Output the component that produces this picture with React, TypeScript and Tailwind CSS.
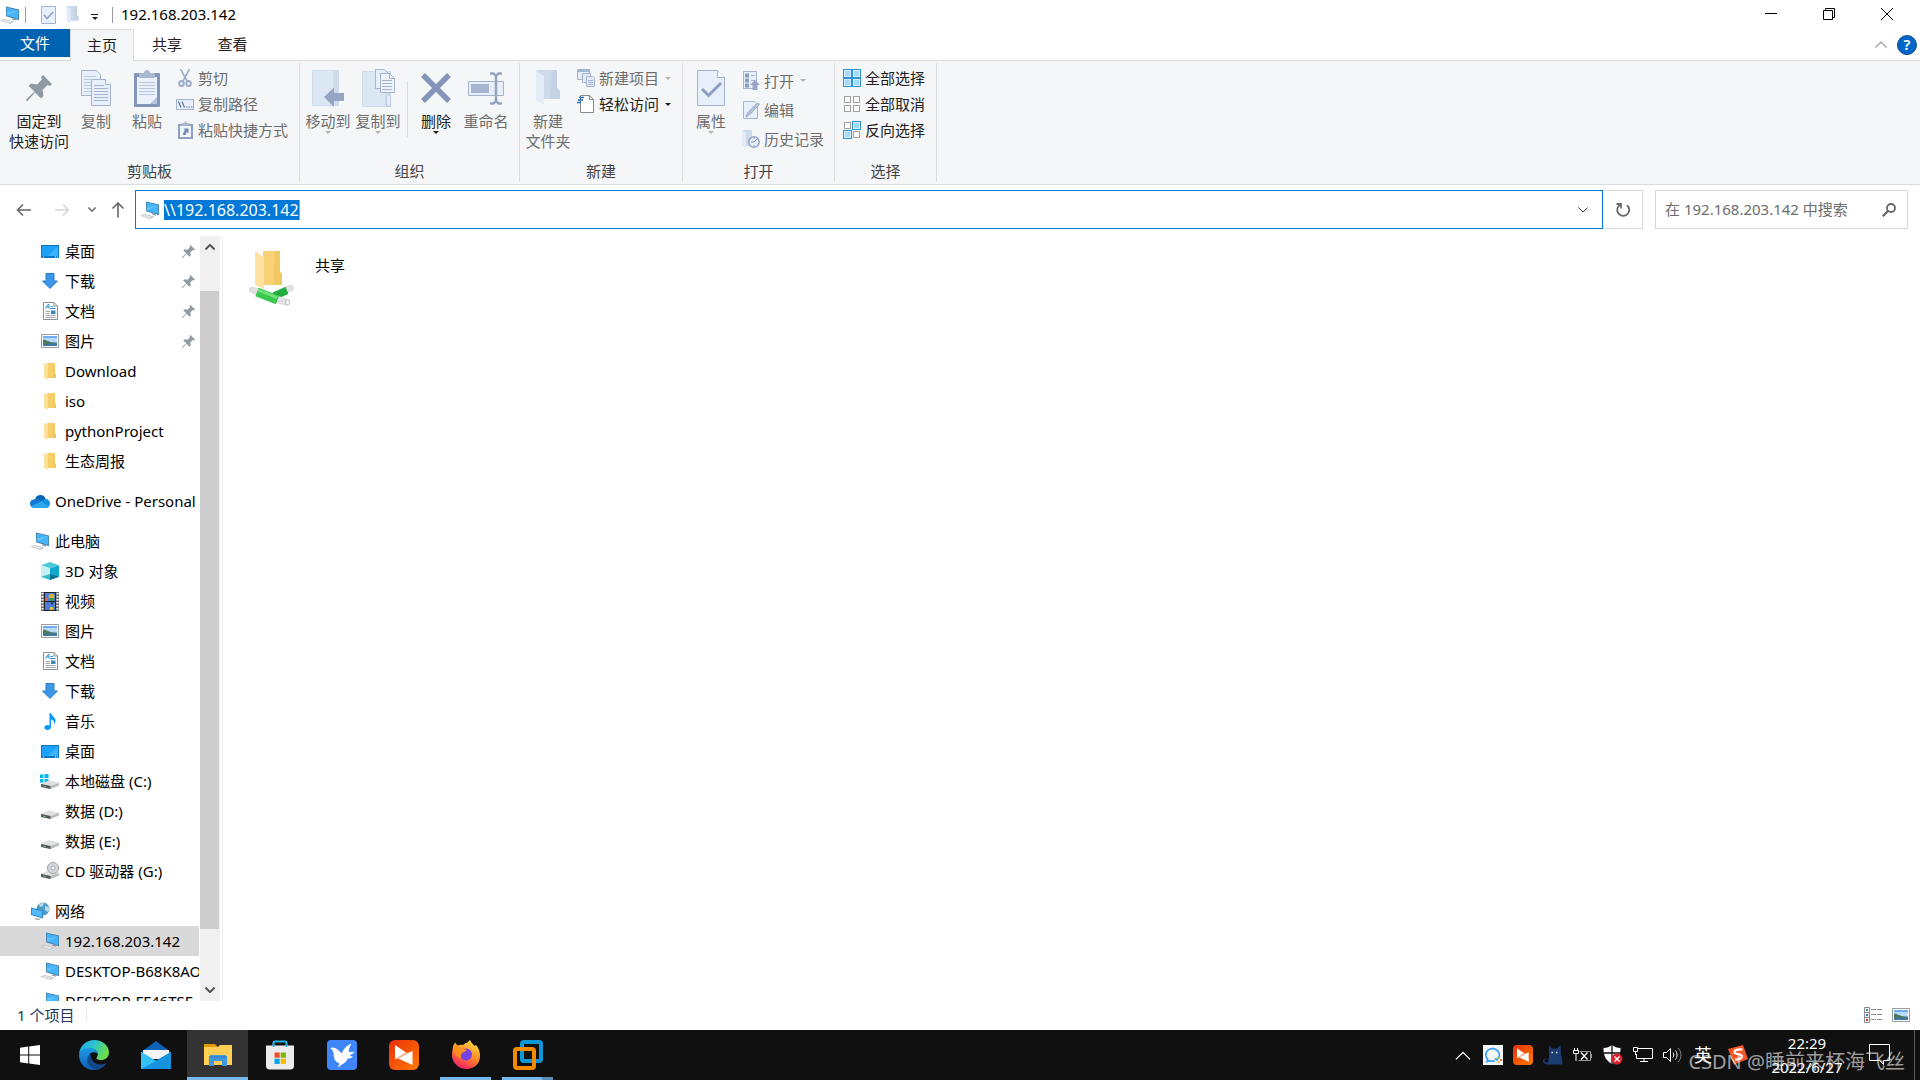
import type { ReactNode } from "react";
import clsx from "clsx";

type IconProps = { className?: string };

/* ---------- shared icons ---------- */

function PcIcon({ className = "w-5 h-[18px]" }: IconProps) {
  return (
    <svg viewBox="0 -1 20 18" className={className}>
      <path d="M6 -.5 19 2.600v10.600L6 9.300z" fill="#4a7fa8" />
      <path d="M6.8 .6 18.2 3.300v8.700L6.8 8.500z" fill="#45b5fb" />
      <path d="M18.2 3.300 6.8 8.500v-3z" fill="#7accfd" opacity=".6" />
      <path d="M12 11.200l4 1.200v1.400l-4-1.200z" fill="#8d98a0" />
      <path d="M0 13.800 4.500 12l10 2.600-4.200 2.400z" fill="#bfc5ca" />
      <path d="M2.200 13.800 5 12.800l7 1.900-2.400 1.300z" fill="#e6e9eb" />
    </svg>
  );
}

function FolderIcon({ className = "w-3 h-[17px]" }: IconProps) {
  return (
    <svg viewBox="0 0 12 17" className={className}>
      <path d="M3 0h8v10.5l1 .8V15H3z" fill="#f7cf6a" />
      <path d="M9.500 0H11v10.500l1 .8V15H9z" fill="#f3c65a" />
      <path d="M0 0l4 1.800V16.800L0 15z" fill="#fee29b" />
    </svg>
  );
}

function PaleFolder({ className }: IconProps) {
  return (
    <svg viewBox="0 0 24 36" className={className}>
      <path d="M0 0h21v18l3 3v8H6z" fill="#cddaea" />
      <path d="M16 0h5v18l3 3v8H14z" fill="#c3d2e5" />
      <path d="M0 1l8 5v29l-8-5z" fill="#e3ecf7" />
    </svg>
  );
}

function PinIcon({ className = "w-[13px] h-[13px]" }: IconProps) {
  return (
    <svg viewBox="0 0 26 26" className={className} fill="#8f9ba3">
      <path d="M17 0l9 9-2 2-2.500-1-5 5 1 6-2.500 2.500-6-6L1.500 26 0 25.500.500 24 8.500 16.500l-6-5.500L5 8.500l6 1 5-5L15 2z" />
    </svg>
  );
}

function DesktopIcon() {
  return (
    <svg viewBox="0 0 18 13" className="w-[18px] h-[13px]">
      <path d="M0 0h18v13H0z" fill="#0b77c5" />
      <path d="M1 1h16v10H1z" fill="#1ba1fb" />
      <path d="M17 1v10H7z" fill="#3db2ff" />
      <path d="M2 12h1M14 12h1M16 12h1" stroke="#fff" />
    </svg>
  );
}

function DownloadIcon() {
  return (
    <svg viewBox="0 0 16 16" className="w-4 h-4">
      <path d="M4 .5h8V8h3.500L8 15.500.500 8H4z" fill="#3d97e8" stroke="#2a7cc8" />
    </svg>
  );
}

function DocumentIcon() {
  return (
    <svg viewBox="0 0 15 18" className="w-[15px] h-[18px]">
      <path d="M.5.5h10.500l3.500 3.500v13.500H.500z" fill="#fff" stroke="#8a8f94" />
      <path d="M11 .5V4h3.500" fill="none" stroke="#8a8f94" />
      <path d="M2.500 6.500 5 2.500h1v4M3.500 5H6M7.500 4.500H10M7 6.500h5.500" stroke="#2f8fd0" fill="none" />
      <path d="M2.500 9.500H7M2.500 11.500H7M2.500 13.500h10M2.500 15.500h10" stroke="#a0a6ab" />
      <path d="M8 8.500h4.500V12H8z" fill="#3a86b8" />
    </svg>
  );
}

function PictureIcon() {
  return (
    <svg viewBox="0 0 18 14" className="w-[18px] h-[14px]">
      <path d="M.5.5h17v13H.500z" fill="#fff" stroke="#9a9da0" />
      <path d="M2 2h14v10H2z" fill="#6facf3" />
      <path d="M2 4h14v4H2z" fill="#b9dafa" />
      <path d="M2 5.500c3 0 5 2 9 3l5 .8v1H2z" fill="#4d7a5b" />
      <path d="M2 9.800h14V12H2z" fill="#3f78a3" />
    </svg>
  );
}

function OneDriveIcon() {
  return (
    <svg viewBox="0 0 20 13" className="w-5 h-[13px]">
      <path d="M5 4.500A5.500 5.500 0 0 1 15.500 3.500L13 9 3 8z" fill="#0364b8" />
      <path d="M4.500 4.300C1.500 4.500 0 6.300 0 8.600 0 11.200 2 13 4.500 13L14 7 8.500 4.600C7 4 6 4 4.500 4.300z" fill="#0f78d4" />
      <path d="M10.500 6.500 15.500 3.800C18.500 4 20 6.500 20 8.500c0 2.600-1.800 4.500-4 4.500H9z" fill="#1490df" />
      <path d="M4.500 13c-1.500 0-2.800-.8-3.500-1.800L11 6.500l8 4.600C18.300 12.300 17 13 16 13z" fill="#28a8ea" />
    </svg>
  );
}

function CubeIcon() {
  return (
    <svg viewBox="0 0 18 18" className="w-[18px] h-[18px]">
      <path d="M0 3.200 9 0l9 3.200-9 3z" fill="#4cc9d8" />
      <path d="M0 3.200l9 3V18l-9-3.200z" fill="#c3f0f2" />
      <path d="M18 3.200l-9 3V18l9-3.200z" fill="#0fa9cf" />
      <path d="M9 12v6l-9-3.200z" fill="#35bccb" />
      <path d="M9 12v6l9-3.200z" fill="#04718f" />
    </svg>
  );
}

function VideoIcon() {
  return (
    <svg viewBox="0 0 18 19" className="w-[18px] h-[19px]">
      <path d="M0 0h18v19H0z" fill="#6a6a6a" />
      <path d="M1.500 1v17M16.500 1v17" stroke="#fff" strokeWidth="2" strokeDasharray="1.500 1.500" />
      <path d="M3 0h12v19H3z" fill="#222" />
      <path d="M4 1h10v8H4zM4 10h10v8H4z" fill="#4a7fe0" />
      <circle cx="10.500" cy="4.500" r="2.800" fill="#e0b32c" />
      <path d="M9 6h3.500v2.500H9z" fill="#3f9a3d" />
      <path d="M4 5.500h3V9H4z" fill="#d8645a" />
      <path d="M9.500 10.500h3l-1.500 3z" fill="#2b2b2b" />
      <circle cx="10.500" cy="16.500" r="1.800" fill="#e8c12e" />
    </svg>
  );
}

function MusicIcon() {
  return (
    <svg viewBox="0 0 12 17" className="w-3 h-[17px]">
      <path d="M5.500 0h1.500c.5 3 4.500 4 4.500 7.500 0 1.500-.5 2.500-1.500 3.500.5-3-1-4-3-4.500V14c0 2-1.700 3-3.500 3S.300 16 .300 14.500 2 12 3.500 12c.8 0 1.500.2 2 .5z" fill="#0a99f2" />
    </svg>
  );
}

function DriveIcon({ kind }: { kind?: "windows" | "cd" }) {
  return (
    <svg viewBox="0 0 20 18" className="w-5 h-[18px]">
      {kind === "windows" && (
        <path d="M0 2.500h3.500V6H0zM4.500 2h4v4h-4zM0 7h3.500v3.500H0zM4.500 7h4v4h-4z" fill="#00b7f1" />
      )}
      <path d="M1 12 9 8.500 19 11v2.500l-8.500 3.500L1 14.500z" fill="#b9bcbe" />
      <path d="M1 12 9 8.500 19 11l-8.500 3z" fill="#e0e1e2" />
      <path d="M1 12l9.500 2v3L1 15z" fill="#55585a" />
      <path d="M3 14.200l3 .6" stroke="#52c24f" />
      {kind === "cd" && (
        <>
          <circle cx="13" cy="6" r="5.500" fill="#d6dadd" stroke="#9aa0a5" />
          <circle cx="13" cy="6" r="2" fill="#fff" stroke="#9aa0a5" />
        </>
      )}
    </svg>
  );
}

function NetworkIcon() {
  return (
    <svg viewBox="0 0 19 18" className="w-[19px] h-[18px]">
      <circle cx="12" cy="7" r="6.500" fill="#4e9cc9" />
      <path d="M8 2.500c2-1.500 4-1.800 5-1.500l-1 3-3 1zM14 4l4 1c.5 2 0 4-1 5l-3-2z" fill="#b6dbe9" />
      <path d="M0 5.500 12 8.500v8L0 13z" fill="#2c83bb" />
      <path d="M.800 6.600 11.200 9.300v6L.800 12.300z" fill="#50bbfc" />
      <path d="M4 16.500l5 1.300" stroke="#a5adb2" strokeWidth="1.500" />
    </svg>
  );
}

/* ---------- ribbon icons ---------- */

function CheckPage({ className }: IconProps) {
  return (
    <svg viewBox="0 0 28 36" className={className}>
      <path d="M.500.500h20l7 7v28H.500z" fill="#e6effa" stroke="#a4b4d0" />
      <path d="M20.500.500v7h7" fill="#fff" stroke="#a4b4d0" />
      <path d="M5 19l6.500 6.500L24 13" fill="none" stroke="#8d9fc1" strokeWidth="3" />
    </svg>
  );
}

function SmallCheckPage() {
  return (
    <svg viewBox="0 0 15 18" className="w-[15px] h-[18px]">
      <path d="M.500.500h14v17H.500z" fill="#e6effa" stroke="#a4b4d0" />
      <path d="M3 9l3 3.500L12 6" fill="none" stroke="#8d9fc1" strokeWidth="1.500" />
    </svg>
  );
}

function CopyIcon() {
  return (
    <svg viewBox="0 0 30 36" className="w-[30px] h-9">
      <path d="M.500.500h15l4 4v21H.500z" fill="#e6effa" stroke="#a4b4d0" />
      <path d="M3 6.500h12M3 9.500h13M3 12.500h8M3 15.500h7M3 18.500h7M3 21.500h7" stroke="#bccae0" />
      <path d="M10.500 9.500h14l5 5v21h-19z" fill="#e6effa" stroke="#a4b4d0" />
      <path d="M24.500 9.500v5h5" fill="#fff" stroke="#a4b4d0" />
      <path d="M13 15.500h10M13 18.500h14M13 21.500h14M13 24.500h14M13 27.500h14M13 30.500h14" stroke="#a4b4d0" />
    </svg>
  );
}

function PasteIcon() {
  return (
    <svg viewBox="0 0 26 37" className="w-[26px] h-[37px]">
      <rect y="3" width="26" height="34" rx="1" fill="#8396ba" />
      <path d="M3 7h20v27H3z" fill="#eaf1fb" />
      <path d="M5 3h5c0-4 6-4 6 0h5v5H5z" fill="#a9b7cf" />
      <path d="M5 12.500h16M5 15.500h16M5 18.500h16M5 21.500h16M5 24.500h16" stroke="#b9c7de" />
      <path d="M23 27v7h-7z" fill="#b4c1d8" />
    </svg>
  );
}

function CutIcon() {
  return (
    <svg viewBox="0 0 14 18" className="w-[14px] h-[18px]" fill="none" stroke="#9badc8">
      <path d="M2.500 0 9 12M11.500 0 5 12" strokeWidth="1.600" />
      <ellipse cx="3.500" cy="14.500" rx="2.300" ry="2.600" strokeWidth="2" />
      <ellipse cx="10.500" cy="14.500" rx="2.300" ry="2.600" strokeWidth="2" />
    </svg>
  );
}

function CopyPathIcon() {
  return (
    <svg viewBox="0 0 18 11" className="w-[18px] h-[11px]">
      <path d="M.500.500h17v10H.500z" fill="#e6effa" stroke="#a4b4d0" />
      <path d="M2.500 2.500l2.500 6M6 2.500l2.500 6M10 8h1.500M12.500 8H14M15 8h1.500" stroke="#5f7499" strokeWidth="1.200" />
    </svg>
  );
}

function PasteShortcutIcon() {
  return (
    <svg viewBox="0 0 15 18" className="w-[15px] h-[18px]">
      <path d="M0 3h15v15H0z" fill="#8fa0c0" />
      <path d="M2 5h11v11H2z" fill="#f1f6fd" />
      <path d="M4 2h2.500c0-2.500 2-2.500 2 0H11v3H4z" fill="#a9b7cf" />
      <path d="M5.500 7.500h5v5l-1.700-1.700-1.300 3.200H5c0-2 .5-3.500 2-4.800z" fill="#7389af" />
    </svg>
  );
}

function MoveToIcon() {
  return (
    <svg viewBox="0 0 32 37" className="w-8 h-[37px]">
      <path d="M0 0h27v36H0z" fill="#cfdcec" />
      <path d="M1 1h20v34H1z" fill="#dce7f4" />
      <path d="M12 27 22 17.500V23h10v8H22v6z" fill="#95a5c2" />
    </svg>
  );
}

function CopyToIcon() {
  return (
    <svg viewBox="0 0 33 38" className="w-[33px] h-[38px]">
      <path d="M0 2h29v36H0z" fill="#cfdcec" />
      <path d="M1 3h22v34H1z" fill="#dce7f4" />
      <path d="M24.500 37V28c0-3 4-3 4 0v9z" fill="#e6effa" stroke="#bccae0" />
      <path d="M13.500.500h9l4 4v15h-13z" fill="#e6effa" stroke="#a4b4d0" />
      <path d="M18.500 4.500h9l5 5v14h-14z" fill="#eef4fc" stroke="#a4b4d0" />
      <path d="M27.500 4.500v5h5M20 11.500h10M20 14.500h10M20 17.500h10M20 20.500h10" fill="none" stroke="#a4b4d0" />
    </svg>
  );
}

function DeleteIcon() {
  return (
    <svg viewBox="0 0 32 32" className="w-8 h-8">
      <path d="M3 3l26 26M29 3 3 29" stroke="#8395b8" strokeWidth="5.500" />
    </svg>
  );
}

function RenameIcon() {
  return (
    <svg viewBox="0 0 36 33" className="w-9 h-[33px]">
      <path d="M.500 9.500h35v14H.500z" fill="#e6effa" stroke="#a4b4d0" />
      <path d="M3 12h18v9H3z" fill="#a6b5d1" />
      <path d="M22 1.500h3.500L28 4l2.500-2.500H34M22 31.500h3.500L28 29l2.500 2.500H34M28 4v25" fill="none" stroke="#94a4c2" strokeWidth="2.500" />
    </svg>
  );
}

function NewItemIcon() {
  return (
    <svg viewBox="0 0 18 18" className="w-[18px] h-[18px]" fill="#e3ecf7" stroke="#a4b4d0">
      <path d="M.500.500h12v10H.500z" />
      <path d="M1 2h11" strokeWidth="2" />
      <path d="M5.500 4.500h8v9h-8z" />
      <path d="M9.500 7.500h6l2 2v8h-8z" />
      <path d="M11 11.500h5M11 13.500h5M11 15.500h5" />
    </svg>
  );
}

function EasyAccessIcon() {
  return (
    <svg viewBox="0 0 18 18" className="w-[18px] h-[18px]">
      <path d="M3.500.500h9l4 4v13h-13z" fill="#fff" stroke="#8a8a8a" />
      <path d="M12.500.500v4h4" fill="none" stroke="#8a8a8a" />
      <path d="M2 2.500h5M1 5h5M0 7.500h4" stroke="#1e6fb8" strokeWidth="1.400" />
    </svg>
  );
}

function OpenIcon() {
  return (
    <svg viewBox="0 0 17 19" className="w-[17px] h-[19px]">
      <path d="M.500.500h13v17H.500z" fill="#e6effa" stroke="#a4b4d0" />
      <path d="M2 2.500h4v4H2zM2 7.500h4v4H2zM2 12.500h4v4H2z" fill="#8d9fc1" />
      <path d="M8 4.500h4M8 9.500h4" stroke="#a4b4d0" />
      <path d="M12 9l5 5h-2.500v5h-5v-5H7z" fill="#95a5c2" />
    </svg>
  );
}

function EditIcon() {
  return (
    <svg viewBox="0 0 17 18" className="w-[17px] h-[18px]">
      <path d="M.500.500h11l3 3v14H.500z" fill="#e6effa" stroke="#a4b4d0" />
      <path d="M16.500 3 6 14.500l-3 1.500 1-3.500L14 2z" fill="#b5c3da" stroke="#9fb0cd" />
    </svg>
  );
}

function HistoryIcon() {
  return (
    <svg viewBox="0 0 18 18" className="w-[18px] h-[18px]">
      <path d="M0 0h10v9l3 2v5H3z" fill="#cddaea" />
      <path d="M0 0l4 2.500V18l-4-2.500z" fill="#e3ecf7" />
      <circle cx="12" cy="12" r="5.200" fill="#e6effa" stroke="#94a4c2" strokeWidth="1.500" />
      <path d="M12 12l3-3M12 12H9M12 8v1M12 15v1" stroke="#7c8fb3" />
    </svg>
  );
}

function SelectIcon({ cells }: { cells: [boolean, boolean, boolean, boolean] }) {
  const spots = [[0, 0], [9, 0], [0, 9], [9, 9]];
  return (
    <svg viewBox="0 0 18 18" className="w-[18px] h-[18px]">
      {spots.map(([x, y], i) =>
        cells[i] ? (
          <g key={i}>
            <rect x={x + 0.5} y={y + 0.5} width="8" height="8" fill="#d6eeff" stroke="#2f93dc" />
            <rect x={x + 2} y={y + 2} width="5" height="5" fill="#a6dafc" />
          </g>
        ) : (
          <rect key={i} x={x + 1.5} y={y + 1.5} width="6" height="6" fill="#fff" stroke="#a2a2a2" />
        )
      )}
    </svg>
  );
}

function Caret({ muted }: { muted?: boolean }) {
  return (
    <svg viewBox="0 0 6 3" className="w-1.5 h-[3px] shrink-0">
      <path d="M0 0h6L3 3z" fill={muted ? "#b4b4b4" : "#1c1c1c"} />
    </svg>
  );
}

function Chevron({ up, className = "w-2.5 h-1.5", width = 1.2 }: { up?: boolean; className?: string; width?: number }) {
  return (
    <svg viewBox="0 0 12 7" className={className} fill="none" stroke="currentColor" strokeWidth={width}>
      <path d={up ? "M.500 6.500 6 1l5.500 5.500" : "M.500.500 6 6 11.500.500"} />
    </svg>
  );
}

/* ---------- ribbon ---------- */

type RibbonButtonProps = {
  icon: ReactNode;
  label: string;
  second?: string;
  disabled?: boolean;
  caret?: boolean;
  className?: string;
};

function LargeButton({ icon, label, second, disabled, caret, className = "w-[50px]" }: RibbonButtonProps) {
  return (
    <button
      disabled={disabled}
      className={clsx("flex flex-col items-center whitespace-nowrap leading-5", disabled ? "text-[#6d6d6d]" : "text-[#222]", className)}
    >
      <span className="flex h-[46px] items-center justify-center">{icon}</span>
      <span>{label}</span>
      {second && <span>{second}</span>}
      {caret && <Caret muted={disabled} />}
    </button>
  );
}

function SmallButton({ icon, label, disabled, caret, className = "h-[26px]" }: RibbonButtonProps) {
  return (
    <button
      disabled={disabled}
      className={clsx("flex items-center gap-1 whitespace-nowrap", disabled ? "text-[#6d6d6d]" : "text-[#222]", className)}
    >
      <span className="flex w-[18px] justify-center">{icon}</span>
      <span>{label}</span>
      {caret && <span className="ml-0.5"><Caret muted={disabled} /></span>}
    </button>
  );
}

type RibbonGroupProps = { label: string; width: string; inset?: string; children: ReactNode };

function RibbonGroup({ label, width, inset = "pl-[3px]", children }: RibbonGroupProps) {
  return (
    <section className={clsx("my-0.5 flex shrink-0 flex-col justify-between border-r border-[#dcdddf]", width)}>
      <div className={clsx("flex items-start pt-0.5", inset)}>{children}</div>
      <h2 className="pb-px text-center leading-5 text-[#444]">{label}</h2>
    </section>
  );
}

function Ribbon() {
  return (
    <div className="flex h-[125px] border-y border-[#dadbdc] bg-[#f5f6f7]">
      <RibbonGroup label="剪贴板" width="w-[300px]" inset="pl-2">
        <LargeButton className="w-[62px]" icon={<PinIcon className="w-[26px] h-[26px]" />} label="固定到" second="快速访问" />
        <LargeButton className="w-[52px]" icon={<CopyIcon />} label="复制" disabled />
        <LargeButton className="w-[50px]" icon={<PasteIcon />} label="粘贴" disabled />
        <div className="ml-1 flex flex-col">
          <SmallButton icon={<CutIcon />} label="剪切" disabled />
          <SmallButton icon={<CopyPathIcon />} label="复制路径" disabled />
          <SmallButton icon={<PasteShortcutIcon />} label="粘贴快捷方式" disabled />
        </div>
      </RibbonGroup>
      <RibbonGroup label="组织" width="w-[220px]">
        <LargeButton icon={<MoveToIcon />} label="移动到" disabled caret />
        <LargeButton icon={<CopyToIcon />} label="复制到" disabled caret />
        <span className="ml-1 mr-[3px] mt-4 h-14 w-px bg-[#dcdddf]" />
        <LargeButton icon={<DeleteIcon />} label="删除" caret />
        <LargeButton icon={<RenameIcon />} label="重命名" disabled />
      </RibbonGroup>
      <RibbonGroup label="新建" width="w-[163px]">
        <LargeButton icon={<PaleFolder className="w-6 h-9" />} label="新建" second="文件夹" disabled />
        <div className="ml-1 flex flex-col">
          <SmallButton icon={<NewItemIcon />} label="新建项目" disabled caret />
          <SmallButton icon={<EasyAccessIcon />} label="轻松访问" caret />
        </div>
      </RibbonGroup>
      <RibbonGroup label="打开" width="w-[152px]">
        <LargeButton icon={<CheckPage className="w-7 h-9" />} label="属性" disabled caret />
        <div className="ml-1.5 flex flex-col pt-px">
          <SmallButton className="h-[29px]" icon={<OpenIcon />} label="打开" disabled caret />
          <SmallButton className="h-[29px]" icon={<EditIcon />} label="编辑" disabled />
          <SmallButton className="h-[29px]" icon={<HistoryIcon />} label="历史记录" disabled />
        </div>
      </RibbonGroup>
      <RibbonGroup label="选择" width="w-[102px]" inset="pl-2">
        <div className="flex flex-col">
          <SmallButton icon={<SelectIcon cells={[true, true, true, true]} />} label="全部选择" />
          <SmallButton icon={<SelectIcon cells={[false, false, false, false]} />} label="全部取消" />
          <SmallButton icon={<SelectIcon cells={[false, true, true, false]} />} label="反向选择" />
        </div>
      </RibbonGroup>
    </div>
  );
}

/* ---------- window chrome ---------- */

function TitleBar() {
  return (
    <header className="flex h-[29px] items-center">
      <PcIcon className="w-5 h-[18px]" />
      <span className="ml-[5px] h-4 w-px bg-[#9a9a9a]" />
      <button aria-label="属性" className="ml-[15px]"><SmallCheckPage /></button>
      <button aria-label="新建文件夹" className="ml-2.5"><PaleFolder className="w-[13px] h-[18px]" /></button>
      <button aria-label="自定义快速访问工具栏" className="ml-3 flex flex-col items-center gap-0.5 pt-1">
        <span className="h-px w-[7px] bg-black" />
        <Caret />
      </button>
      <span className="ml-3.5 h-4 w-px bg-[#9a9a9a]" />
      <h1 className="ml-2 flex-1 pb-0.5 text-black">192.168.203.142</h1>
      <div className="flex h-full pb-0.5 pr-1">
        <button aria-label="最小化" className="flex w-[58px] items-center justify-center">
          <span className="h-px w-3 bg-black" />
        </button>
        <button aria-label="还原" className="flex w-[58px] items-center justify-center">
          <svg viewBox="0 0 12 12" className="w-3 h-3" fill="none" stroke="#000">
            <path d="M.500 2.500h9v9h-9zM2.500 2.500v-2h9v9h-2" />
          </svg>
        </button>
        <button aria-label="关闭" className="flex w-[58px] items-center justify-center">
          <svg viewBox="0 0 12 12" className="w-3 h-3" stroke="#000">
            <path d="M0 0l12 12M12 0 0 12" />
          </svg>
        </button>
      </div>
    </header>
  );
}

function RibbonTabs() {
  return (
    <nav className="flex h-[31px] items-start text-[#222]">
      <button className="h-7 w-[70px] bg-[#0063b1] text-white">文件</button>
      <button className="relative -mb-px h-8 w-16 border border-b-0 border-[#dadbdc] bg-[#f5f6f7] pb-0.5">主页</button>
      <button className="h-[31px] w-[66px] pb-0.5">共享</button>
      <button className="h-[31px] w-[65px] pb-0.5">查看</button>
      <div className="ml-auto flex h-[31px] items-center gap-2.5 pr-[3px]">
        <button aria-label="最小化功能区" className="text-[#999]"><Chevron up className="w-3 h-[7px]" /></button>
        <button aria-label="帮助" className="flex h-5 w-5 items-center justify-center rounded-full border border-[#154c85] bg-[#0067c8] font-semibold leading-none text-white">?</button>
      </div>
    </nav>
  );
}

function Arrow({ d, className, label }: { d: string; className: string; label: string }) {
  return (
    <button aria-label={label} className={className}>
      <svg viewBox="0 0 16 16" className="w-4 h-4" fill="none" stroke="currentColor" strokeWidth="1.600">
        <path d={d} />
      </svg>
    </button>
  );
}

function AddressRow() {
  return (
    <div className="flex h-[51px] items-start pr-3 pt-[5px]">
      <div className="flex h-[39px] w-[135px] shrink-0 items-center pl-4">
        <Arrow label="返回" className="text-[#666]" d="M15 8H1.500M7 2.500 1.500 8 7 13.500" />
        <Arrow label="前进" className="ml-[22px] text-[#d6d6d6]" d="M1 8h13.500M9 2.500 14.500 8 9 13.500" />
        <button aria-label="最近浏览的位置" className="ml-[18px] text-[#777]"><Chevron className="w-2 h-[5px]" width={2.4} /></button>
        <Arrow label="向上" className="ml-[14px] text-[#666]" d="M8 15.500V1M2.500 6.500 8 1l5.500 5.500" />
      </div>
      <div className="flex h-[39px] flex-1 items-center border border-[#0078d7] pl-1">
        <PcIcon />
        <input
          aria-label="地址"
          defaultValue="\\192.168.203.142"
          className="ml-1 h-5 border-r border-[#ff8728] bg-[#0078d7] text-[16px] text-white outline-none [field-sizing:content]"
        />
        <button aria-label="以前的位置" className="ml-auto mr-3.5 text-[#333]"><Chevron /></button>
      </div>
      <button aria-label="刷新" className="flex h-[39px] w-10 items-center justify-center border border-l-0 border-[#d9d9d9] text-[#6a6a6a]">
        <svg viewBox="0 0 16 16" className="w-4 h-4" fill="none" stroke="currentColor" strokeWidth="1.800">
          <path d="M12 3.200A6 6 0 1 1 5 2.800M1.500 2H6v4.500" />
        </svg>
      </button>
      <label className="ml-3 flex h-[39px] w-[253px] items-center border border-[#d9d9d9] px-[9px]">
        <input
          aria-label="搜索"
          placeholder="在 192.168.203.142 中搜索"
          className="min-w-0 flex-1 pb-0.5 outline-none placeholder:text-[#6d6d6d]"
        />
        <svg viewBox="0 0 14 14" className="w-[14px] h-[14px] mr-0.5" fill="none" stroke="#666" strokeWidth="1.800">
          <circle cx="9" cy="5" r="4" />
          <path d="M6 8 .700 13.300" strokeWidth="2.200" />
        </svg>
      </label>
    </div>
  );
}

/* ---------- navigation pane ---------- */

type NavItem = { label: string; icon: ReactNode; pinned?: boolean; root?: boolean; selected?: boolean };

const navGroups: NavItem[][] = [
  [
    { label: "桌面", icon: <DesktopIcon />, pinned: true },
    { label: "下载", icon: <DownloadIcon />, pinned: true },
    { label: "文档", icon: <DocumentIcon />, pinned: true },
    { label: "图片", icon: <PictureIcon />, pinned: true },
    { label: "Download", icon: <FolderIcon /> },
    { label: "iso", icon: <FolderIcon /> },
    { label: "pythonProject", icon: <FolderIcon /> },
    { label: "生态周报", icon: <FolderIcon /> },
  ],
  [{ label: "OneDrive - Personal", icon: <OneDriveIcon />, root: true }],
  [
    { label: "此电脑", icon: <PcIcon />, root: true },
    { label: "3D 对象", icon: <CubeIcon /> },
    { label: "视频", icon: <VideoIcon /> },
    { label: "图片", icon: <PictureIcon /> },
    { label: "文档", icon: <DocumentIcon /> },
    { label: "下载", icon: <DownloadIcon /> },
    { label: "音乐", icon: <MusicIcon /> },
    { label: "桌面", icon: <DesktopIcon /> },
    { label: "本地磁盘 (C:)", icon: <DriveIcon kind="windows" /> },
    { label: "数据 (D:)", icon: <DriveIcon /> },
    { label: "数据 (E:)", icon: <DriveIcon /> },
    { label: "CD 驱动器 (G:)", icon: <DriveIcon kind="cd" /> },
  ],
  [
    { label: "网络", icon: <NetworkIcon />, root: true },
    { label: "192.168.203.142", icon: <PcIcon />, selected: true },
    { label: "DESKTOP-B68K8AO", icon: <PcIcon /> },
    { label: "DESKTOP-FF46TSF", icon: <PcIcon /> },
  ],
];

function NavPane() {
  return (
    <aside className="flex w-[223px] shrink-0 border-r border-[#f0f0f0]">
      <div className="flex w-[199px] flex-col gap-2.5 overflow-hidden">
        {navGroups.map((group, i) => (
          <ul key={i} className="shrink-0">
            {group.map((item) => (
              <li key={item.label}>
                <button
                  className={clsx(
                    "flex h-[30px] w-full items-center gap-[5px] whitespace-nowrap pr-1 text-black",
                    item.root ? "pl-[30px]" : "pl-10",
                    item.selected && "bg-[#d9d9d9]"
                  )}
                >
                  <span className="flex w-5 shrink-0 justify-center">{item.icon}</span>
                  <span>{item.label}</span>
                  {item.pinned && <span className="ml-auto"><PinIcon /></span>}
                </button>
              </li>
            ))}
          </ul>
        ))}
      </div>
      <div className="ml-px flex w-5 flex-col items-center bg-[#f0f0f0] text-[#505050]">
        <span className="flex h-[22px] shrink-0 items-center pr-px"><Chevron up className="w-2.5 h-1.5" width={2.4} /></span>
        <div className="flex w-full flex-1 flex-col">
          <span className="h-[33px] shrink-0" />
          <span className="mr-px flex-1 bg-[#cdcdcd]" />
          <span className="h-[50px] shrink-0" />
        </div>
        <span className="flex h-[22px] shrink-0 items-center pr-px"><Chevron className="w-2.5 h-1.5" width={2.4} /></span>
      </div>
    </aside>
  );
}

function SharedFolderIcon() {
  return (
    <svg viewBox="0 0 46 55" className="w-[46px] h-[55px]">
      <path d="M14 0h17v21l2 2v11H14z" fill="#f7d173" />
      <path d="M26 0h5v21l2 2v11H24z" fill="#f2c862" />
      <path d="M6 0l9 6v32l-9-4z" fill="#fee3a0" />
      <path d="M3.500 39l7 2.500M34 40l7.500-3" stroke="#dfe0e1" strokeWidth="7" strokeLinecap="round" />
      <path d="M25 45l13-5.500" stroke="#22ad3c" strokeWidth="7.500" />
      <path d="M28 48.500l9 2.500" stroke="#dfe0e1" strokeWidth="7.500" strokeLinecap="round" />
      <path d="M8 41l20.500 8" stroke="#3cc84f" strokeWidth="9" />
      <path d="M9 39l19 7.500" stroke="#74e07b" strokeWidth="2.500" />
      <ellipse cx="38.500" cy="51.300" rx="2" ry="2.500" fill="#fff" stroke="#b5b7b9" />
    </svg>
  );
}

function StatusBar() {
  return (
    <div className="flex h-[29px] shrink-0 items-center pb-px pr-2.5 text-[#1e395b]">
      <span className="ml-[17px] pb-px">1 个项目</span>
      <span className="ml-3 h-3 w-px bg-[#e6e6e6]" />
      <div className="ml-auto flex items-center gap-2.5">
        <button aria-label="详细信息">
          <svg viewBox="0 0 18 16" className="w-[18px] h-4" fill="none" stroke="#8a8a8a">
            <path d="M.500.500h5v15h-5zM.500 5.500h5M.500 10.500h5M7 2.500h5M13 2.500h5M7 7.500h5M13 7.500h5M7 12.500h5M13 12.500h5" />
            <path d="M2 3h2" stroke="#2d8f8f" strokeWidth="2" />
            <path d="M2 8h2" stroke="#2b74d0" strokeWidth="2" />
            <path d="M2 13h2" stroke="#c33" strokeWidth="2" />
          </svg>
        </button>
        <button aria-label="大图标"><PictureIcon /></button>
      </div>
    </div>
  );
}

/* ---------- taskbar ---------- */

function StartIcon() {
  return (
    <svg viewBox="0 0 20 20" className="w-5 h-5" fill="#fff">
      <path d="M0 2.700 8.200 1.600v7.900H0zM9.200 1.400 20 0v9.500H9.200zM0 10.500h8.200v7.900L0 17.300zM9.200 10.500H20V20L9.200 18.600z" />
    </svg>
  );
}

function EdgeIcon() {
  return (
    <svg viewBox="0 0 30 30" className="w-[30px] h-[30px]">
      <defs>
        <linearGradient id="edge-top" x1="0" y1="0" x2="1" y2=".4">
          <stop offset="0" stopColor="#1fa4e8" />
          <stop offset=".5" stopColor="#2cc3d2" />
          <stop offset="1" stopColor="#6bdc4c" />
        </linearGradient>
        <linearGradient id="edge-left" x1="0" y1="0" x2="0" y2="1">
          <stop offset="0" stopColor="#1e9be6" />
          <stop offset="1" stopColor="#0f5bb5" />
        </linearGradient>
      </defs>
      <path d="M0 14C1 5 8 0 15 0c9 0 15 6 15 12.500 0 5-4 7.500-8 7.500-3.500 0-4.500-1.200-4.500-2 0-.7 1.300-1.500 1.300-3.500C18.800 11 15 8.500 11 8.500 5 8.500 1 11 0 14z" fill="url(#edge-top)" />
      <path d="M0 15c.5-5 5.500-7 9.500-7 5 0 8.500 2.500 9 5.500-5-3-9 0-9 5C9.500 24 13 28 18 30c-1 0-2 .1-3 .1C6.500 30 0 23.500 0 15z" fill="url(#edge-left)" />
      <path d="M12 14.500C11 20 16 24.500 21.500 24.500c3 0 4.500-1 5.800-1.500-2 4-6 6.500-10 7C12 29 8 24.500 8 19.500c0-2.500 2-4.500 4-5z" fill="#114a8b" />
    </svg>
  );
}

function MailIcon() {
  return (
    <svg viewBox="0 0 30 28" className="w-[30px] h-7">
      <path d="M0 11 15 0l15 11v3H0z" fill="#0c63b5" />
      <path d="M2 9h26v9H2z" fill="#f4f4f4" />
      <path d="M0 11l15 9 15-9v17H0z" fill="#2fb3ee" />
      <path d="M0 28 30 11v17z" fill="#1593dd" />
      <path d="M0 11l15 9-15 8z" fill="#35c1f5" />
    </svg>
  );
}

function ExplorerIcon() {
  return (
    <svg viewBox="0 0 28 24" className="w-7 h-6">
      <path d="M0 1h11l3 3H0z" fill="#e09a00" />
      <path d="M0 4h14l2-2h12v20H0z" fill="#ffcf55" />
      <path d="M5 23v-9c0-1 1-2 2-2h14c1 0 2 1 2 2v9h-5v-5h-8v5z" fill="#3f97e0" />
      <path d="M5 14h18" stroke="#2e7cc9" />
    </svg>
  );
}

function StoreIcon() {
  return (
    <svg viewBox="0 0 30 30" className="w-[30px] h-[30px]">
      <path d="M8.500 7V2.500c0-1 .5-1 1-1h11c.8 0 1 .5 1 1V7" fill="none" stroke="#29b3e8" strokeWidth="1.800" />
      <path d="M1 5.500h28V26c0 2-1.500 3.500-3.500 3.500h-21C2.500 29.500 1 28 1 26z" fill="#ececec" />
      <path d="M8.500 3v4M21.500 3v4" stroke="#29b3e8" strokeWidth="1.800" />
      <path d="M9.500 12.500h5.200v5.200H9.500z" fill="#f25022" />
      <path d="M15.700 12.500h5.200v5.200h-5.200z" fill="#7fba00" />
      <path d="M9.500 18.700h5.200v5.200H9.500z" fill="#00a4ef" />
      <path d="M15.700 18.700h5.200v5.200h-5.200z" fill="#ffb900" />
    </svg>
  );
}

function BirdIcon() {
  return (
    <svg viewBox="0 0 30 30" className="w-[30px] h-[30px]">
      <rect width="30" height="30" rx="4" fill="#3f86fb" />
      <path d="M3 8c2-.8 4-.8 5.500.2 2.500 1.300 4.500 3.300 6.500 5.300C16 9 20 5.500 24.500 3.500c-2 3.500-2.800 6-2.800 8.500 2 .3 4 0 6-.5-1.200 1.800-3 3-5 3.800 1 .8 2 1.200 3.300 1.500-2 1.500-3.500 1.800-5.500 1.900C19 23 15 24 11 27.500c.3-2 .8-3 1.500-4C8.500 22 6.500 18.500 6.700 14 6.700 11.500 5.500 9.500 3 8z" fill="#fff" />
    </svg>
  );
}

function BowIcon({ className = "w-[30px] h-[30px]" }: IconProps) {
  return (
    <svg viewBox="0 0 30 30" className={className}>
      <defs>
        <linearGradient id="bow" x1="0" y1="0" x2="1" y2="1">
          <stop offset="0" stopColor="#e92f0c" />
          <stop offset="1" stopColor="#ff7a00" />
        </linearGradient>
      </defs>
      <rect width="30" height="30" rx="6" fill="url(#bow)" />
      <path d="M6 5l11 7.500L6 19.500z" fill="#fff" />
      <path d="M23.500 11v14L8 18z" fill="#fff" />
      <path d="M7 18.500 17 12.500l4 .2L9.500 18.800z" fill="#f9b59c" />
    </svg>
  );
}

function FirefoxIcon() {
  return (
    <svg viewBox="0 0 30 30" className="w-[30px] h-[30px]">
      <defs>
        <linearGradient id="fox" x1=".8" y1="0" x2=".3" y2="1">
          <stop offset="0" stopColor="#ffe14a" />
          <stop offset=".5" stopColor="#ff8a22" />
          <stop offset="1" stopColor="#f5196a" />
        </linearGradient>
      </defs>
      <path d="M2 7c0-2 1.500-3.500 2.500-4.500C5 4 6 5 7 5.500 8.500 4.500 10.500 4.500 12 5c1.500-1 2-2 4.500-2.500C17.500 1.500 18.500.5 19 0c1 2.500 3 4 4.500 6L25 5c3 3 4 7 4 11 0 8-6 13-13.500 13S1 23 1 15.500C1 12 1.500 9 2 7z" fill="url(#fox)" />
      <circle cx="15" cy="14.500" r="6" fill="#7542e5" />
      <path d="M2 9c4-3 8-2 10 0 1.500.5 3 .3 4 .8-.5 1.500-3 2-4.500 3C10 14 9 16 10.500 18 6 18 3 14 2 9z" fill="#ff8f1f" />
    </svg>
  );
}

function VmwareIcon() {
  return (
    <svg viewBox="0 0 30 30" className="w-[30px] h-[30px]" fill="none" strokeWidth="4">
      <rect x="9" y="2" width="19" height="19" rx="2" stroke="#0d96d8" />
      <rect x="2" y="9" width="19" height="19" rx="2" stroke="#f48a00" />
      <path d="M9 13v6c0 1 1 2 2 2h6" stroke="#0d96d8" />
    </svg>
  );
}

type TaskApp = { label: string; icon: ReactNode; active?: boolean; running?: boolean; stacked?: boolean };

const taskApps: TaskApp[] = [
  { label: "Microsoft Edge", icon: <EdgeIcon /> },
  { label: "邮件", icon: <MailIcon /> },
  { label: "文件资源管理器", icon: <ExplorerIcon />, active: true },
  { label: "Microsoft Store", icon: <StoreIcon /> },
  { label: "迅雷", icon: <BirdIcon /> },
  { label: "远程桌面", icon: <BowIcon /> },
  { label: "Firefox", icon: <FirefoxIcon />, running: true },
  { label: "VMware", icon: <VmwareIcon />, running: true, stacked: true },
];

function TrayIcons() {
  return (
    <>
      <button aria-label="显示隐藏的图标" className="flex w-[30px] justify-center text-white"><Chevron up className="w-4 h-[9px]" width={1} /></button>
      <span className="flex w-[30px] justify-center">
        <svg viewBox="0 0 20 20" className="w-5 h-5">
          <path d="M0 0h20v20H0z" fill="#f2f6fa" />
          <path d="M5 14.500a6.800 6.300 0 1 1 8 .8M5 14.500l-1 2 3-.8c2 .6 3.500.5 5 0" fill="none" stroke="#3b9df0" strokeWidth="1.700" />
          <path d="M12 13.500l2.500 1.500" stroke="#4aa0ee" strokeWidth="2" />
          <path d="M15.500 12v2" stroke="#79cc4a" strokeWidth="2" />
          <path d="M15.500 16v2" stroke="#f9b233" strokeWidth="2" />
          <path d="M17 15h2" stroke="#ef6a3a" strokeWidth="2" />
        </svg>
      </span>
      <span className="flex w-[30px] justify-center"><BowIcon className="w-5 h-5" /></span>
      <span className="flex w-[30px] justify-center">
        <svg viewBox="0 0 20 20" className="w-5 h-5">
          <path d="M6 0l3 3.500h5L17.500 0 18 7c-.5 2 0 3 .5 5l1 7.500H5.500C2 19.500 0 18 0 15.500c0-1.500 1.500-2.500 3-1.500-1 0-2 1-1.500 2 .5 1.200 2 1.500 3.500 1.500l1-6z" fill="#1c3d70" />
          <path d="M8.500 7.500h1.500M13 7.500h1.500" stroke="#cfe0f5" strokeWidth="1.500" />
        </svg>
      </span>
      <span className="flex w-[30px] justify-center">
        <svg viewBox="0 0 20 14" className="w-5 h-[14px]" fill="none" stroke="#fff">
          <path d="M1.500 0v2.500M4.500 0v2.500M.500 2.500h5v3h-5zM3 5.500V13" />
          <path d="M6.500 3.500h11v9h-12M18.500 6v4" stroke="#999" />
          <path d="M8 4.500l6.500 7M14.500 4.500 8 11.500" strokeWidth="1.300" />
        </svg>
      </span>
      <span className="flex w-[30px] justify-center">
        <svg viewBox="0 0 20 20" className="w-5 h-5">
          <path d="M9 0c2.500 2 5 3 8.500 3 0 7-1 12-8.500 16C2 15 .500 10 .500 3 4 3 6.500 2 9 0z" fill="#fff" />
          <path d="M9 0v19M0 8h18" stroke="#101010" strokeWidth="1.300" />
          <circle cx="14" cy="14" r="5.500" fill="#d9202c" />
          <path d="M11.500 11.500l5 5M16.500 11.500l-5 5" stroke="#fff" strokeWidth="1.400" />
        </svg>
      </span>
      <span className="flex w-[30px] justify-center">
        <svg viewBox="0 0 20 16" className="w-5 h-4" fill="none" stroke="#fff">
          <path d="M4 1.500h15.500v10H3.500V7M7 14.500h8M11 11.500v3M.500.500h4v4h-4zM2.500 4.500V8" />
        </svg>
      </span>
      <span className="flex w-[30px] justify-center">
        <svg viewBox="0 0 20 18" className="w-5 h-[18px]" fill="none" stroke="#fff">
          <path d="M.500 6.500h3l4-4v13l-4-4h-3zM10 6.500c1 1.500 1 3.500 0 5M12.500 4.500c2 2.500 2 6.500 0 9" />
          <path d="M15 2c4 4 4 10 0 14" stroke="#888" />
        </svg>
      </span>
      <span className="w-[30px] text-center text-[18px] leading-5 text-white">英</span>
      <span className="flex w-10 justify-center">
        <svg viewBox="0 0 20 20" className="w-5 h-5">
          <path d="M0 4 15 0l5 14-14 5.500z" fill="#f0562a" />
          <path d="M14.500 4.500C10 4 6 5 6.500 7.500c.5 2 7 1 7.500 3.500.5 2.500-4 3.500-7 3.500" fill="none" stroke="#fff" strokeWidth="2.200" />
        </svg>
      </span>
    </>
  );
}

function Taskbar() {
  return (
    <footer className="relative flex h-[50px] shrink-0 items-stretch bg-[#101010]">
      <button aria-label="开始" className="flex w-[62px] items-center pl-5"><StartIcon /></button>
      {taskApps.map((app) => (
        <button
          key={app.label}
          aria-label={app.label}
          className={clsx("ml-px flex w-[61px] flex-col items-center", app.active && "bg-[#333]")}
        >
          <span className="flex h-[47px] items-center pt-[3px]">{app.icon}</span>
          {app.active && <span className="h-[3px] w-full bg-[#76b9ed]" />}
          {app.running && (
            <span className="flex h-[3px] w-[51px] bg-[#76b9ed]">
              {app.stacked && <span className="ml-auto w-[11px] bg-[#5a8db8]" />}
            </span>
          )}
        </button>
      ))}
      <div className="ml-auto flex items-center">
        <TrayIcons />
        <time className="w-[98px] text-center leading-6 text-white">
          22:29
          <br />
          2022/6/27
        </time>
        <button aria-label="通知" className="flex w-[58px] pl-[13px]">
          <svg viewBox="0 0 21 22" className="w-[21px] h-[22px]" fill="none" stroke="#fff">
            <path d="M.500.500h20v16h-6v4l-4-4H.500z" />
          </svg>
        </button>
        <span className="mr-[5px] h-full w-px bg-[#5a5a5a]" />
      </div>
      <p className="pointer-events-none absolute bottom-1 right-[15px] whitespace-nowrap text-[20px] leading-7 text-white/60">
        CSDN @睡前来杯海飞丝
      </p>
    </footer>
  );
}

export default function App() {
  return (
    <div className="flex h-screen flex-col overflow-hidden bg-white font-['Noto_Sans','Noto_Sans_CJK_SC',sans-serif] text-[15px] leading-5">
      <TitleBar />
      <RibbonTabs />
      <Ribbon />
      <AddressRow />
      <div className="flex min-h-0 flex-1">
        <NavPane />
        <main className="flex-1 pl-[26px] pt-[15px]">
          <button className="flex items-start gap-5 text-black">
            <SharedFolderIcon />
            <span className="pt-1">共享</span>
          </button>
        </main>
      </div>
      <StatusBar />
      <Taskbar />
    </div>
  );
}
